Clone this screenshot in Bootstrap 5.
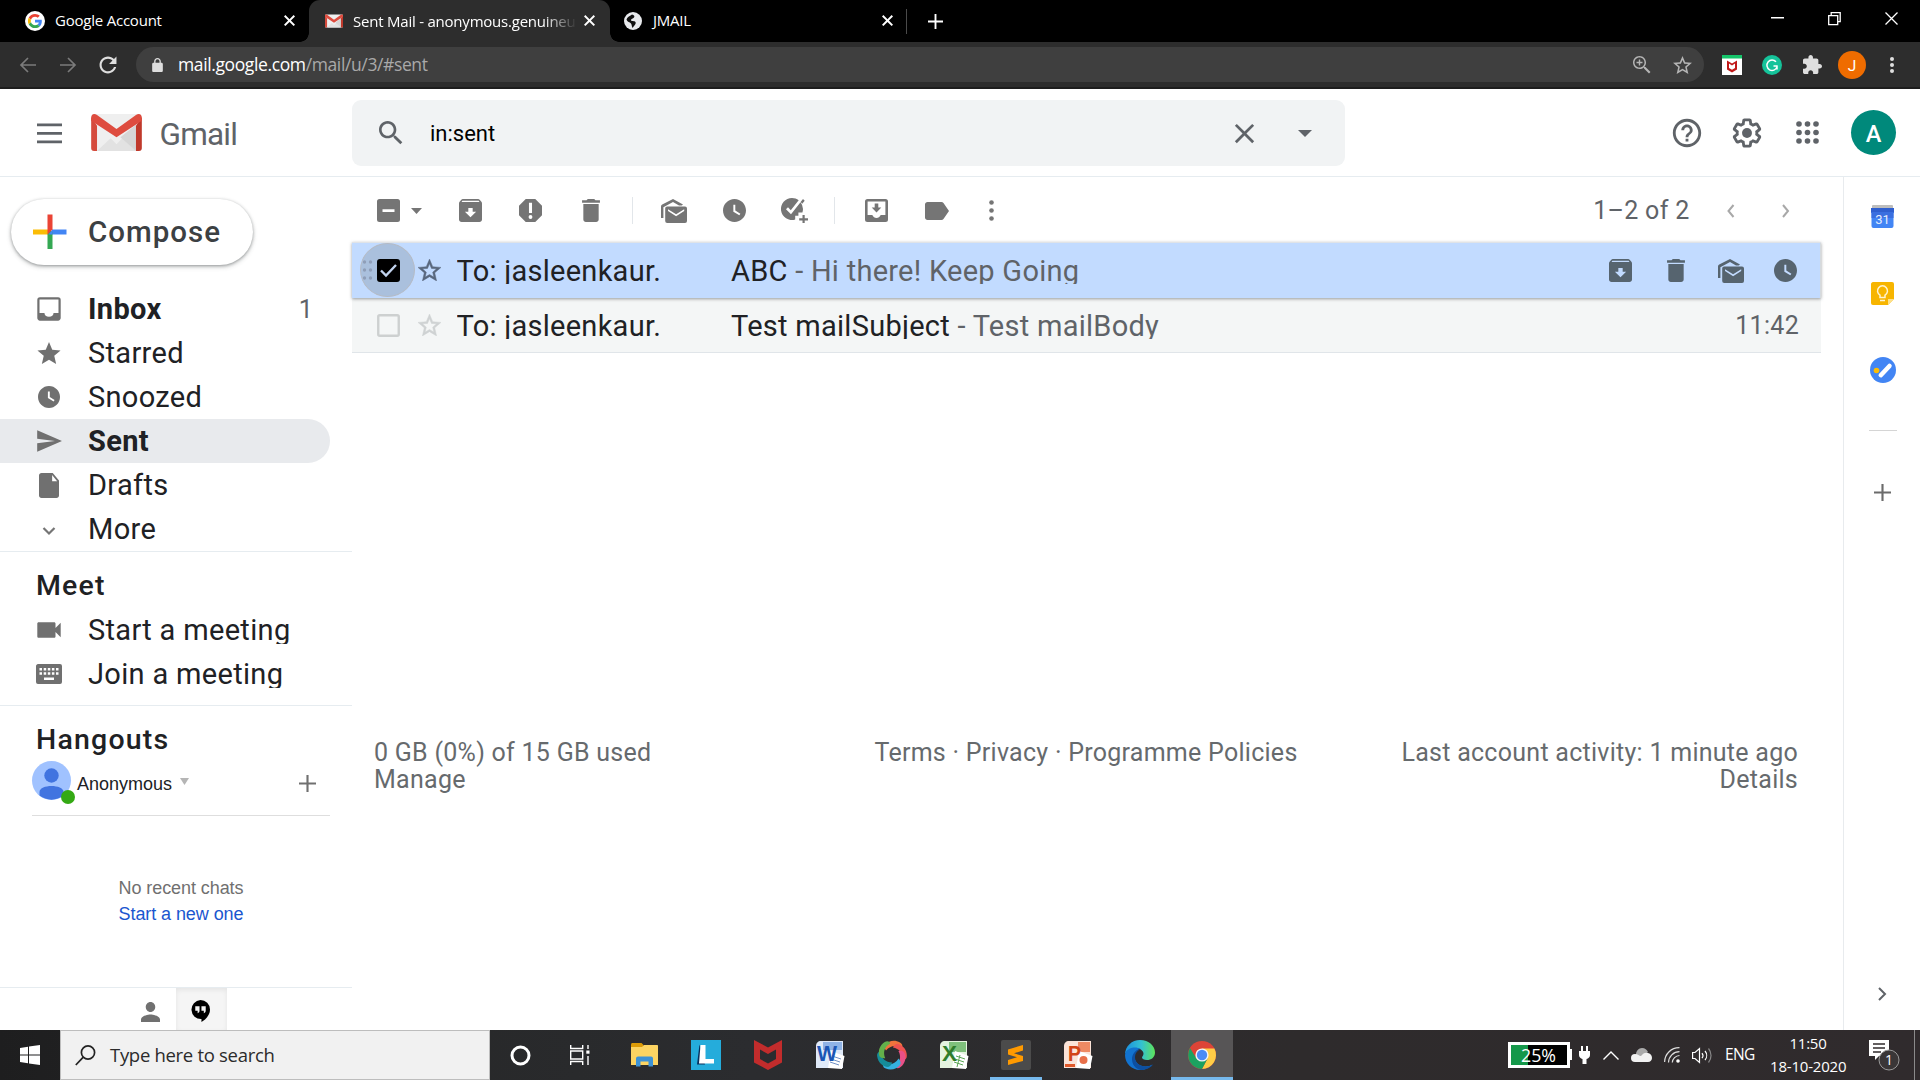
<!DOCTYPE html>
<html lang="en">
<head>
<meta charset="utf-8">
<title>Sent Mail</title>
<link href="https://cdn.jsdelivr.net/npm/bootstrap@5.3.0/dist/css/bootstrap.min.css" rel="stylesheet">
<style>
html,body{height:1080px;overflow:hidden}
body{width:1920px;font-family:Roboto,"Liberation Sans",sans-serif;color:#202124;background:#fff;line-height:1}
svg{display:block;flex:none;overflow:visible}
svg:not([fill]){fill:currentColor}
.segoe{font-family:"Open Sans","Noto Sans",sans-serif}
.w{white-space:nowrap;display:inline-block}
/* tab strip */
.tabstrip{height:42px;background:#000;color:#fff;font-size:15px;letter-spacing:-.22px}
.btab{height:42px;padding:0 12px 1px 25px}
.btab-1{width:309px;padding-right:14px}
.btab-2{width:301px;background:#2d2d2d;border-radius:11px 11px 0 0;padding:0 15px 1px 16px;position:relative}
.btab-2::before,.btab-2::after{content:"";position:absolute;bottom:0;width:9px;height:9px}
.btab-2::before{left:-9px;background:radial-gradient(circle at 0 0,#000 8.5px,#2d2d2d 9px)}
.btab-2::after{right:-9px;background:radial-gradient(circle at 100% 0,#000 8.5px,#2d2d2d 9px)}
.btab-3{width:296px;padding-left:14px;padding-right:13px}
.fadeout{width:222px;margin-left:10px;-webkit-mask-image:linear-gradient(90deg,#000 190px,transparent 224px);mask-image:linear-gradient(90deg,#000 190px,transparent 224px);line-height:24px}
.tsep{width:1px;height:25px;background:#4a4a4a;margin-top:9px}
.newtab{padding-left:21px}
.tt1{margin-left:10px}
.tt3{margin-left:11px}
.wctl{width:57px}
/* address row */
.addr{height:47px;background:#2d2d2d;border-bottom:2px solid #1d1d1d;color:#dedede;padding-top:5px}
.navbtn{width:40px;height:35px}
.pill{width:1568px;height:35px;border-radius:18px;background:#3f3f3f;margin-left:8px;padding:0 12px 0 16px}
.url{font-size:17.5px;letter-spacing:-.38px;color:#fff;margin-left:15px}
.url .rest{color:#a9a9a9}
.zoomic{margin-right:22px}
.exts{height:35px}
.extc{width:40px;height:35px}
/* header */
.ghead{height:88px;border-bottom:1px solid #e6ecf0;color:#5f6368}
.brand{width:352px;padding-left:32px}
.brand .logo{margin-left:23.500px}
.brand .name{font-size:31.500px;letter-spacing:-.8px;margin-left:18px;padding-top:4px}
.searchbox{width:993px;height:66px;border-radius:9px;background:#f1f3f4;margin-top:11px;padding-left:23px}
.searchbox .q{font-size:22px;color:#000;margin-left:23px;padding-top:2px}
.clearc{margin-right:3px}
.hcell{width:60px}
.hcell-r{width:60.400px}
.avc{padding-left:13px;padding-right:24.500px}
/* columns */
.stage{height:853px}
.side{width:352px}
.compose{width:242.500px;height:66px;border-radius:33px;margin:22px 0 0 10.500px;padding-left:21px;box-shadow:0 1px 3px rgba(60,64,67,.45),0 2px 4px 1px rgba(60,64,67,.15);color:#3c4043}
.compose .lbl{font-size:29.500px;font-weight:500;letter-spacing:1px;margin-left:20.500px;padding-top:1px}
.folders{margin-top:22px}
.frow{height:44px;width:330px;padding-left:36px;font-size:29px;letter-spacing:.32px}
.frow svg{color:#707070}
.frow .lbl{margin-left:26px;line-height:34px;height:34px}
.frow .lbl.clip{line-height:28px;height:28px}
.frow.on{background:#e8eaed;border-radius:0 22px 22px 0}
.frow .cnt{margin-left:auto;margin-right:17px;font-size:25px;color:#5f6368}
.clip{overflow:hidden}
.rule{border-top:1px solid #e6ecf0}
.meet{padding-top:13px}
.meet .mt{height:43px}
.rule2{margin-top:9px}
.hangt{padding-top:13px;height:55px}
.sechead{font-size:28.500px;font-weight:500;letter-spacing:1.200px;padding-left:36px}
.arial{font-family:"Liberation Sans",Arial,sans-serif}
.hav{width:39px;height:39px}
.online{left:29px;top:29px;width:14px;height:14px;border-radius:50%;background:#34a914;position:absolute}
.hrow{height:55px;margin:0 22px 0 32px;width:298px;border-bottom:1px solid #dedede}
.anon{font-size:18px;margin-left:6px;padding-top:14px}
.acaret{margin:17px 0 0 8px}
.aplus{margin:13.500px 14px 0 auto;color:#707070}
.nochat{font-size:18px;line-height:26px;letter-spacing:-.08px;color:#707070;margin-top:59px;padding-left:10px}
.nochat .lnk{color:#1a56cf}
.sidetabs{height:43px;padding-left:125px}
.pers{width:51px;padding-top:14px;padding-left:16px;color:#707070}
.tabsel{width:51px;height:42px;background:#f5f5f5;box-shadow:inset 0 2px 5px rgba(0,0,0,.07);padding:12px 0 0 15px}
/* toolbar */
.mainc{width:1491px}
.tbar{height:65px;padding:2px 0 0 24.500px;color:#757575}
.tcell{width:60.300px;display:flex;justify-content:center;align-items:center}
.vsep{width:1px;height:27px;background:#e2e6ea}
.crt{margin-left:11px}
.tc1{margin-left:18.500px}.s1{margin-left:11px}.tc2{margin-left:11px}.s2{margin-left:9.500px}.tc3{margin-left:11px}.tc4{width:50px}
.pgc{font-size:25px;color:#5f6368;letter-spacing:.3px;margin-right:13.500px}
.mact{width:55px;display:flex;justify-content:center;color:#56646f}
.lastc{margin-right:30px}
.mrow{width:1469px;font-size:29px;letter-spacing:.27px;padding-left:24.500px}
.mrow .who{width:274.500px}
.mrow .snip{color:#5f6368}
.mrow-sel{height:56px;background:#c2dbff;box-shadow:inset 0 1px 0 #dfe3e8,inset -1px 0 0 #d5dade,0 1px 3px rgba(60,64,67,.5);position:relative;z-index:1}
.mrow-2{height:55px;background:#f4f6f6;border-bottom:1.500px solid #e0e5e9}
.halo{width:55px;height:54px;left:8px;top:1px;border-radius:50%;background:rgba(100,110,120,.25);border:1px solid #b5bbc5;position:absolute}
.grip{left:10px;top:17px;position:absolute}
.star{margin-left:18.500px;margin-right:15.500px;margin-top:-1px}
.ln{line-height:34px;height:30px}
.lnwrap{height:30px;margin-bottom:2px}
.macts{margin-right:8px;padding-top:1px}
.tm{font-size:25px;letter-spacing:.3px;margin-right:22px}
.foot{width:1469px;margin-top:386px;padding:0 23px 0 22px;font-size:25px;line-height:27px;color:#666a6d;letter-spacing:.27px}
.foot>div{flex:1 1 0}
/* right panel */
.rail{width:77px;border-left:1px solid #e8ebee;color:#6b6b6b;padding-left:1px}
.r1{margin-top:27.500px}.r2{margin-top:54px}.r3{margin-top:52.500px}.r4{width:28px;height:1px;background:#d5d5d5;margin-top:47px}.r5{margin-top:52.500px}.r6{margin-bottom:29px}
/* taskbar */
.tkbar{height:50px;background:linear-gradient(90deg,#1e1e1f 0,#272829 400px,#2b2c2f 750px,#2e2b2c 1300px,#302b2d 1920px);color:#fff}
.start{width:60px}
.tsearch{width:430px;background:#f1f1f1;border:1px solid #bdbdbd;color:#2b2b2b;font-size:18.500px;letter-spacing:-.3px;padding-left:14px}
.ts{margin-left:14px}
.tk{width:62px;height:50px;display:flex;flex:none;justify-content:center;align-items:center;position:relative}
.tk.sys{width:60px}
.tk.first{margin-left:3px}
.tk.run::after{content:"";position:absolute;left:5px;right:5px;bottom:0;height:3px;background:#76b9ed}
.tk.act{background:#575556}.tk.act::after{left:0;right:0}
.bat{margin-right:7px}.plug{margin-right:13px}.chv{margin-right:11.500px}.cld{margin-right:12.500px}.wif{margin-right:12px}.spk{margin-right:12px}
.eng{font-size:15.500px;letter-spacing:-.7px;margin-right:15.500px}
.clk{font-size:15px;line-height:23px;letter-spacing:-.2px;width:76px;margin-right:23px}
.ntf{margin-right:14px}
.edge{width:1px;height:50px;background:#8a8a8a;margin-right:5px}
</style>
</head>
<body>
<svg width="0" height="0" class="position-absolute">
<symbol id="x" viewBox="0 0 24 24"><path d="M19 6.410 17.590 5 12 10.590 6.410 5 5 6.410 10.590 12 5 17.590 6.410 19 12 13.410 17.590 19 19 17.590 13.410 12z"/></symbol>
<symbol id="xs" viewBox="0 0 12 12"><path d="M1.500 0 6 4.500 10.500 0 12 1.500 7.500 6 12 10.500 10.500 12 6 7.500 1.500 12 0 10.500 4.500 6 0 1.500z"/></symbol>
<symbol id="arch" viewBox="3 3 18 18"><path d="M20.540 5.230l-1.390-1.680C18.880 3.210 18.470 3 18 3H6c-.470 0-.880.210-1.160.550L3.460 5.230C3.170 5.570 3 6.020 3 6.500V19c0 1.100.900 2 2 2h14c1.100 0 2-.900 2-2V6.500c0-.480-.170-.930-.460-1.270zM12 17.200 7.600 12.900h2.700v-2.800h3.400v2.800h2.700zM5 5.300l.600-1h12.800l.600 1z"/></symbol>
<symbol id="trash" viewBox="5 3 14 18"><path d="M6 19c0 1.100.900 2 2 2h8c1.100 0 2-.900 2-2V7H6v12zM19 4h-3.500l-1-1h-5l-1 1H5v2h14V4z"/></symbol>
<symbol id="clock" viewBox="2 2 20 20"><path d="M12 2C6.500 2 2 6.500 2 12s4.500 10 10 10 10-4.500 10-10S17.500 2 12 2zm4.200 14.200L11 13V7h1.700v5.100l4.400 2.700-.900 1.400z"/></symbol>
<symbol id="mails" viewBox="0 0 26 24"><path d="M2.400 19H0V7.600c0-.9.400-1.500 1.200-2L12 0l10 5.400-1.300 1.200H18L12 3.100 2.400 8.200z"/><path fill-rule="evenodd" d="M6.200 7.500h17.800a2 2 0 0 1 2 2V22a2 2 0 0 1-2 2H6.200a2 2 0 0 1-2-2V9.500c0-1.100.9-2 2-2zm.8 2.800v1.700l8.100 5.300 8.100-5.300v-1.700L15.100 15.200z"/></symbol>
<symbol id="staro" viewBox="2 2 20 19"><path d="M22 9.240l-7.190-.620L12 2 9.190 8.630 2 9.240l5.460 4.730L5.820 21 12 17.270 18.180 21l-1.630-7.030L22 9.240zM12 15.400l-3.760 2.270 1-4.280-3.320-2.880 4.380-.380L12 6.100l1.710 4.040 4.380.380-3.320 2.880 1 4.280L12 15.400z"/></symbol>
<symbol id="mlogo" viewBox="0 0 52 38"><rect width="52" height="38" rx="3" fill="#efefef"/><path d="M6 38 20 25 26 31 32 25 46 38z" fill="#e2e2e2"/><path d="M30 24 46 11v27z" fill="#d6d6d6"/><path d="M0 3v32a3 3 0 0 0 3 3h3V12z" fill="#d54b3d"/><path d="M52 3v32a3 3 0 0 1-3 3h-3V12z" fill="#c0392b"/><path d="M0 4C0 0 3-1 6 1l20 14.500L46 1c3-2 6-1 6 3v3L26 24 0 7z" fill="#de4c3f"/></symbol>
<symbol id="plus" viewBox="0 0 16 16"><path d="M7 0h2v7h7v2H9v7H7V9H0V7h7z"/></symbol>
</svg>

<!-- browser tabs -->
<div class="tabstrip d-flex segoe">
  <div class="btab btab-1 d-flex align-items-center">
    <svg width="20" height="20" viewBox="0 0 48 48"><circle cx="24" cy="24" r="24" fill="#fff"/><g transform="translate(7 7) scale(.71)"><path fill="#ea4335" d="M24 9.500c3.540 0 6.710 1.220 9.210 3.600l6.850-6.850C35.900 2.380 30.470 0 24 0 14.620 0 6.510 5.380 2.560 13.220l7.980 6.190C12.430 13.720 17.740 9.500 24 9.500z"/><path fill="#4285f4" d="M46.980 24.550c0-1.570-.150-3.090-.380-4.550H24v9.020h12.940c-.580 2.960-2.260 5.480-4.780 7.180l7.730 6c4.510-4.180 7.090-10.360 7.090-17.650z"/><path fill="#fbbc05" d="M10.530 28.590c-.480-1.450-.760-2.990-.760-4.590s.270-3.140.760-4.590l-7.980-6.190C.920 16.460 0 20.120 0 24c0 3.880.920 7.540 2.560 10.780l7.970-6.190z"/><path fill="#34a853" d="M24 48c6.480 0 11.930-2.130 15.890-5.810l-7.730-6c-2.150 1.450-4.920 2.300-8.160 2.300-6.260 0-11.570-4.220-13.470-9.910l-7.980 6.190C6.510 42.620 14.620 48 24 48z"/></g></svg>
    <span class="w tt1">Google Account</span><svg class="ms-auto" width="11" height="11"><use href="#xs"/></svg>
  </div>
  <div class="btab btab-2 d-flex align-items-center">
    <svg width="18" height="14"><use href="#mlogo"/></svg>
    <div class="fadeout"><span class="w">Sent Mail - anonymous.genuineu</span></div><svg class="ms-auto" width="11" height="11"><use href="#xs"/></svg>
  </div>
  <div class="btab btab-3 d-flex align-items-center">
    <svg width="18" height="18" viewBox="0 0 18 18"><circle cx="9" cy="9" r="9" fill="#e8eaed"/><path d="M8 2.500c2 .500 3 1.500 2 3-1 1.200-3 1-3 2.500s2.500.700 4 1.500c1.500 1 .500 3-1 4.500l-1.500 2C7.500 14 8 12 6.500 11S3 9.500 2.500 7.500C3 5 5.500 4.500 8 2.500z" fill="#111"/></svg>
    <span class="w tt3">JMAIL</span><svg class="ms-auto" width="11" height="11"><use href="#xs"/></svg>
  </div>
  <div class="tsep"></div>
  <div class="newtab d-flex align-items-center"><svg width="15" height="15"><use href="#plus"/></svg></div>
  <div class="ms-auto d-flex">
    <div class="wctl d-flex justify-content-center pt-3"><svg width="13" height="3"><rect y="1" width="13" height="1.500"/></svg></div>
    <div class="wctl d-flex justify-content-center pt-2"><svg class="mt-1" width="13" height="13" fill="none"><path d="M.7 3.700h9v9h-9zM3.200 3.500V.700h9v9h-2.300" stroke="#fff" stroke-width="1.300"/></svg></div>
    <div class="wctl d-flex justify-content-center pt-2"><svg class="mt-1" width="13" height="13"><path d="M.5.5l12 12M12.500.5l-12 12" stroke="#fff" stroke-width="1.300"/></svg></div>
  </div>
</div>

<!-- address row -->
<div class="addr d-flex segoe">
  <div class="navbtn d-flex align-items-center justify-content-center ms-2"><svg width="16" height="16" fill="none"><path d="M16 8H1.500M8 1 1 8l7 7" stroke="#7b7b7b" stroke-width="1.700"/></svg></div>
  <div class="navbtn d-flex align-items-center justify-content-center"><svg width="16" height="16" fill="none"><path d="M0 8h14.500M8 1l7 7-7 7" stroke="#7b7b7b" stroke-width="1.700"/></svg></div>
  <div class="navbtn d-flex align-items-center justify-content-center"><svg width="18" height="18" viewBox="3.500 3.500 17 17"><path d="M17.650 6.350C16.200 4.900 14.210 4 12 4c-4.420 0-7.990 3.580-7.990 8s3.570 8 7.990 8c3.730 0 6.840-2.550 7.730-6h-2.080c-.820 2.330-3.040 4-5.650 4-3.310 0-6-2.690-6-6s2.690-6 6-6c1.660 0 3.140.690 4.220 1.780L13 11h7V4l-2.350 2.350z"/></svg></div>
  <div class="pill d-flex align-items-center">
    <svg width="11" height="14" viewBox="4 1 16 21"><path fill-rule="evenodd" d="M18 8h-1V6c0-2.760-2.240-5-5-5S7 3.240 7 6v2H6c-1.100 0-2 .900-2 2v10c0 1.100.900 2 2 2h12c1.100 0 2-.900 2-2V10c0-1.100-.900-2-2-2zM9 8V6a3 3 0 0 1 6 0v2z"/></svg>
    <span class="w url">mail.google.com<span class="rest">/mail/u/3/#sent</span></span>
    <svg class="ms-auto zoomic" width="18" height="18" viewBox="3 3 18 18" fill="#b5b5b5"><path d="M15.500 14h-.790l-.280-.270C15.410 12.590 16 11.110 16 9.500 16 5.910 13.090 3 9.500 3S3 5.910 3 9.500 5.910 16 9.500 16c1.610 0 3.090-.590 4.230-1.570l.270.280v.790l5 4.990L20.490 19l-4.990-5zm-6 .5C6.500 14.500 4.500 12 4.500 9.500s2-5 5-5 5 2.200 5 5-2 5-5 5z"/><path d="M8.800 6.500h1.400v2.300h2.300v1.400h-2.300v2.300H8.800v-2.300H6.500V8.800h2.300z"/></svg>
    <svg width="19" height="18" fill="#b5b5b5"><use href="#staro"/></svg>
  </div>
  <div class="exts d-flex align-items-center ms-2">
    <div class="extc d-flex align-items-center justify-content-center"><svg width="20" height="20" viewBox="0 0 20 20"><rect width="20" height="20" fill="#fff"/><rect width="20" height="3.500" fill="#15c56a"/><path fill-rule="evenodd" d="M5 5.500l5 3 5-3v9l-5 3-5-3zm2 3V13l3 1.800 3-1.800V8.500l-3 2z" fill="#c01818"/></svg></div>
    <div class="extc d-flex align-items-center justify-content-center"><svg width="20" height="20" viewBox="0 0 20 20"><circle cx="10" cy="10" r="10" fill="#15c39a"/><path d="M14 6.800A5.200 5.200 0 1 0 15 12M15.500 11h-4M15 10.500v4" stroke="#fff" stroke-width="1.500" fill="none"/></svg></div>
    <div class="extc d-flex align-items-center justify-content-center"><svg width="19" height="19" viewBox="2 1 21 21"><path d="M20.500 11H19V7c0-1.100-.900-2-2-2h-4V3.500C13 2.120 11.880 1 10.500 1S8 2.120 8 3.500V5H4c-1.100 0-1.990.900-1.990 2v3.800H3.500c1.490 0 2.700 1.210 2.700 2.700s-1.210 2.700-2.700 2.700H2V20c0 1.100.900 2 2 2h3.800v-1.500c0-1.490 1.210-2.700 2.700-2.700 1.490 0 2.700 1.210 2.700 2.700V22H17c1.100 0 2-.900 2-2v-4h1.500c1.380 0 2.500-1.120 2.500-2.500S21.880 11 20.500 11z"/></svg></div>
    <div class="extc d-flex align-items-center justify-content-center"><svg width="28" height="28" viewBox="0 0 28 28"><circle cx="14" cy="14" r="14" fill="#ef6c00"/><text x="14" y="19.500" font-size="15.500" font-family="Roboto" letter-spacing="0" fill="#fff" text-anchor="middle">J</text></svg></div>
    <div class="extc d-flex align-items-center justify-content-center"><svg width="4" height="16"><circle cx="2" cy="2" r="2"/><circle cx="2" cy="8" r="2"/><circle cx="2" cy="14" r="2"/></svg></div>
  </div>
</div>

<!-- mail header -->
<div class="ghead d-flex">
  <div class="brand d-flex align-items-center">
    <svg width="35" height="24"><path d="M5 3.800h25M5 12.300h25M5 20.800h25" stroke="#5f6368" stroke-width="2.800"/></svg>
    <svg width="51" height="37" class="logo"><use href="#mlogo"/></svg>
    <span class="w name">Gmail</span>
  </div>
  <div class="searchbox d-flex align-items-center">
    <svg width="32" height="32" viewBox="0 0 24 24"><path d="M15.500 14h-.790l-.280-.270C15.410 12.590 16 11.110 16 9.500 16 5.910 13.090 3 9.500 3S3 5.910 3 9.500 5.910 16 9.500 16c1.610 0 3.090-.590 4.230-1.570l.270.280v.790l5 4.990L20.490 19l-4.990-5zm-6 0C7.010 14 5 11.990 5 9.500S7.010 5 9.500 5 14 7.010 14 9.500 11.990 14 9.500 14z"/></svg>
    <span class="w q">in:sent</span>
    <div class="ms-auto hcell clearc d-flex justify-content-center"><svg width="33" height="33"><use href="#x"/></svg></div>
    <div class="hcell d-flex justify-content-center me-2 pe-1"><svg width="14" height="7"><path d="M0 0h14L7 7z"/></svg></div>
  </div>
  <div class="ms-auto d-flex align-items-center">
    <div class="hcell-r d-flex justify-content-center"><svg width="34" height="34" viewBox="0 0 24 24"><path d="M11 18h2v-2h-2v2zm1-16C6.480 2 2 6.480 2 12s4.480 10 10 10 10-4.480 10-10S17.520 2 12 2zm0 18c-4.410 0-8-3.590-8-8s3.590-8 8-8 8 3.590 8 8-3.590 8-8 8zm0-14c-2.210 0-4 1.790-4 4h2c0-1.100.900-2 2-2s2 .900 2 2c0 2-3 1.750-3 5h2c0-2.250 3-2.500 3-5 0-2.210-1.790-4-4-4z"/></svg></div>
    <div class="hcell-r d-flex justify-content-center"><svg width="34" height="34" viewBox="0 0 24 24"><path d="M13.850 22.250h-3.700c-.740 0-1.360-.540-1.450-1.270l-.270-1.890c-.270-.140-.530-.290-.790-.460l-1.800.720c-.700.260-1.470-.030-1.810-.650L2.200 15.530c-.350-.660-.200-1.440.360-1.880l1.530-1.190c-.010-.150-.020-.300-.020-.460 0-.150.010-.310.020-.460l-1.520-1.190c-.590-.450-.740-1.260-.370-1.880l1.850-3.190c.340-.620 1.110-.900 1.790-.630l1.810.730c.260-.170.520-.320.780-.460l.270-1.910c.090-.700.710-1.250 1.440-1.250h3.700c.740 0 1.360.540 1.450 1.270l.270 1.890c.270.140.530.290.790.460l1.800-.720c.710-.260 1.480.030 1.820.650l1.840 3.180c.360.660.200 1.440-.360 1.880l-1.520 1.190c.010.150.020.300.020.460s-.010.310-.020.460l1.520 1.190c.560.450.720 1.230.370 1.860l-1.860 3.220c-.340.620-1.110.900-1.800.630l-1.800-.720c-.260.170-.520.320-.780.460l-.270 1.910c-.100.680-.720 1.220-1.460 1.220zm-3.230-2h2.760l.370-2.550.530-.220c.440-.180.880-.440 1.340-.780l.450-.340 2.380.960 1.380-2.400-2.030-1.580.070-.560c.030-.260.060-.510.060-.780s-.030-.530-.060-.780l-.070-.560 2.030-1.580-1.390-2.400-2.390.960-.450-.350c-.420-.320-.870-.580-1.330-.770l-.520-.220-.370-2.550h-2.760l-.370 2.550-.530.210c-.440.190-.880.440-1.340.790l-.450.330-2.380-.950-1.390 2.390 2.030 1.580-.070.560a7 7 0 0 0-.060.790c0 .260.020.530.060.780l.070.560-2.030 1.580 1.380 2.400 2.390-.960.450.350c.430.330.860.580 1.330.770l.530.220.380 2.550z"/><circle cx="12" cy="12" r="3.500"/></svg></div>
    <div class="hcell-r d-flex justify-content-center"><svg width="23" height="23" viewBox="0 0 23 23"><g id="dr"><circle cx="3" cy="3" r="2.800"/><circle cx="11.500" cy="3" r="2.800"/><circle cx="20" cy="3" r="2.800"/></g><use href="#dr" y="8.500"/><use href="#dr" y="17"/></svg></div>
    <div class="d-flex avc"><svg width="45" height="45" viewBox="0 0 44 44"><circle cx="22" cy="22" r="22" fill="#00897b"/><text x="22" y="31" font-size="23" font-weight="500" font-family="Roboto" fill="#fff" text-anchor="middle">A</text></svg></div>
  </div>
</div>

<div class="stage d-flex">
  <!-- folders -->
  <div class="side d-flex flex-column">
    <div class="compose d-flex align-items-center"><svg width="36" height="36" viewBox="0 0 36 36"><path fill="#fbbc05" d="M1 15.500h15v5H1z"/><path fill="#4285f4" d="M20 15.500h14.500v5H20z"/><path fill="#34a853" d="M15.500 20.500l2.500-5 2.500 2.500v17h-5z"/><path fill="#ea4335" d="M15.500.5h5v15l-5 5z"/><path fill="#4285f4" d="M20.500 15.500v5h-4z"/></svg><span class="w lbl">Compose</span></div>
    <div class="folders">
      <div class="frow d-flex align-items-center fw-bold"><svg width="26" height="24" viewBox="2 3 20 18"><path fill-rule="evenodd" d="M19 3H5a2 2 0 0 0-2 2v14c0 1.100.900 2 2 2h14c1.100 0 2-.900 2-2V5a2 2 0 0 0-2-2zm.300 12H15.500c0 1.660-1.350 3-3.500 3s-3.500-1.340-3.500-3H4.700V4.700h14.600z"/></svg><span class="w lbl">Inbox</span><span class="cnt fw-normal">1</span></div>
      <div class="frow d-flex align-items-center"><svg width="26" height="22" viewBox="2 2 20 19"><path d="M12 17.270L18.180 21l-1.640-7.030L22 9.240l-7.190-.610L12 2 9.190 8.630 2 9.240l5.460 4.730L5.820 21z"/></svg><span class="w lbl">Starred</span></div>
      <div class="frow d-flex align-items-center"><svg width="26" height="22"><use href="#clock"/></svg><span class="w lbl">Snoozed</span></div>
      <div class="frow d-flex align-items-center on fw-bold"><svg width="26" height="22" viewBox="1 3 22 18"><path d="M2.010 21L23 12 2.010 3 2 10l15 2-15 2z"/></svg><span class="w lbl">Sent</span></div>
      <div class="frow d-flex align-items-center"><svg width="26" height="25" viewBox="2 2 20 20"><path fill-rule="evenodd" d="M6 2c-1.100 0-2 .900-2 2v16c0 1.100.900 2 2 2h12c1.100 0 2-.900 2-2V8l-5-6H6zm8.500 6.500V3.500l4 5z"/></svg><span class="w lbl">Drafts</span></div>
      <div class="frow d-flex align-items-center"><svg class="mt-1" width="26" height="9" viewBox="0 0 26 9" fill="none"><path d="M7.500 1l5.500 5.500L18.500 1" stroke="#757575" stroke-width="2.200"/></svg><span class="w lbl">More</span></div>
    </div>
    <div class="rule meet">
      <div class="sechead mt"><span class="w lh-base">Meet</span></div>
      <div class="frow d-flex align-items-center"><svg width="26" height="18" viewBox="2 6 20 12"><path d="M17 10.500V7c0-.550-.450-1-1-1H4c-.550 0-1 .450-1 1v10c0 .550.450 1 1 1h12c.550 0 1-.450 1-1v-3.500l4 4v-11l-4 4z"/></svg><span class="w lbl clip">Start a meeting</span></div>
      <div class="frow d-flex align-items-center"><svg width="26" height="20" viewBox="0 0 26 20"><path fill-rule="evenodd" d="M2 0h22a2 2 0 0 1 2 2v16a2 2 0 0 1-2 2H2a2 2 0 0 1-2-2V2C0 1 1 0 2 0zm1.500 4v2.500H6V4zm4.200 0v2.500h2.500V4zm4.100 0v2.500h2.500V4zm4.100 0v2.500h2.500V4zM20 4v2.500h2.500V4zM3.500 8.300v2.500H6V8.300zm4.200 0v2.500h2.500V8.300zm4.100 0v2.500h2.500V8.300zm4.100 0v2.500h2.500V8.300zm4.100 0v2.500h2.500V8.300zM8 13.500V16h10v-2.500z"/></svg><span class="w lbl clip">Join a meeting</span></div>
    </div>
    <div class="rule rule2">
      <div class="sechead hangt"><span class="w lh-base">Hangouts</span></div>
      <div class="hrow d-flex arial">
        <div class="position-relative hav"><svg width="39" height="39" viewBox="0 0 39 39"><circle cx="19.500" cy="19.500" r="19.500" fill="#a0c2ff"/><circle cx="19.500" cy="14.500" r="7.200" fill="#4174e0"/><path d="M7.500 34.500V31c0-4 6-6 12-6s12 2 12 6v3.500a19.500 19.500 0 0 1-24 0z" fill="#4174e0"/></svg><span class="online"></span></div>
        <span class="w anon">Anonymous</span>
        <svg class="acaret" width="9" height="7"><path d="M0 0h9L4.500 7z" fill="#b5b5b5"/></svg>
        <svg class="aplus" width="17" height="17"><use href="#plus"/></svg>
      </div>
    </div>
    <div class="text-center arial nochat"><div class="w">No recent chats</div><br><div class="w lnk">Start a new one</div></div>
    <div class="rule mt-auto d-flex sidetabs">
      <div class="pers"><svg width="19" height="20" viewBox="4 4 16 16" preserveAspectRatio="none"><path d="M12 12c2.210 0 4-1.790 4-4s-1.790-4-4-4-4 1.790-4 4 1.790 4 4 4zm0 2c-2.670 0-8 1.340-8 4v2h16v-2c0-2.660-5.330-4-8-4z"/></svg></div>
      <div class="tabsel"><svg width="19" height="22" viewBox="0 0 20 23"><path fill="#000" d="M10 0a10 10 0 0 1 10 10c0 6-4.500 10.500-9 13v-3A10 10 0 0 1 10 0z"/><path fill="#f5f5f5" d="M4.500 6.500H9V11c0 1.500-.7 2.300-2 2.800v-2.500H4.500zM11 6.500h4.500V11c0 1.500-.7 2.300-2 2.800v-2.500H11z"/></svg></div>
    </div>
  </div>

  <!-- message list -->
  <div class="mainc">
    <div class="tbar d-flex align-items-center">
      <svg width="23" height="23" viewBox="0 0 23 23"><path fill-rule="evenodd" d="M2.500 0h18A2.500 2.500 0 0 1 23 2.500v18a2.500 2.500 0 0 1-2.500 2.500h-18A2.500 2.500 0 0 1 0 20.500v-18A2.500 2.500 0 0 1 2.500 0zM5.500 10.300v2.600h12v-2.600z"/></svg>
      <svg class="crt" width="11" height="6"><path d="M0 0h11L5.500 6z"/></svg>
      <div class="tcell tc1"><svg width="23" height="23"><use href="#arch"/></svg></div>
      <div class="tcell"><svg width="23" height="23" viewBox="3 3 18 18"><path fill-rule="evenodd" d="M15.730 3H8.270L3 8.270v7.460L8.270 21h7.460L21 15.730V8.270zM12 15.600a1.500 1.500 0 1 1 0 3 1.500 1.500 0 0 1 0-3zM10.800 6h2.400v8h-2.400z"/></svg></div>
      <div class="tcell"><svg width="20" height="23"><use href="#trash"/></svg></div>
      <div class="vsep s1"></div>
      <div class="tcell tc2"><svg width="26" height="24"><use href="#mails"/></svg></div>
      <div class="tcell"><svg width="23" height="23"><use href="#clock"/></svg></div>
      <div class="tcell"><svg width="27" height="25" viewBox="0 0 27 25"><path d="M11 0c2.500 0 4.800.9 6.700 2.300l-1.600 1.900L9.800 12.200 7 9.300 5 11.200l5 5 9.500-12A11 11 0 0 1 22 11c0 1.300-.2 2.500-.6 3.600h-4v3.200h-3.200v3.700A11 11 0 1 1 11 0z"/><path d="M22 1l1.700 1.700-2.500 3-1.600-1.700zM21.500 17h2.200v3.200H27v2.200h-3.300V25h-2.200v-2.600h-3.300v-2.200h3.300z"/></svg></div>
      <div class="vsep s2"></div>
      <div class="tcell tc3"><svg width="23" height="23" viewBox="0 0 23 23"><path fill-rule="evenodd" d="M2.500 0h18A2.500 2.500 0 0 1 23 2.500v18a2.500 2.500 0 0 1-2.500 2.500h-18A2.500 2.500 0 0 1 0 20.500v-18A2.500 2.500 0 0 1 2.500 0zM2.600 2.600v13.500h4.700c1 2 2.300 2.800 4.200 2.800s3.200-.8 4.200-2.800h4.700V2.600z"/><path d="M9.700 4.500h3.600v4h3L11.500 13.500 6.700 8.500h3z"/></svg></div>
      <div class="tcell"><svg width="24" height="18" viewBox="3 5 19 14" preserveAspectRatio="none"><path d="M17.630 5.840C17.270 5.330 16.670 5 16 5L5 5.010C3.900 5.010 3 5.900 3 7v10c0 1.100.900 1.990 2 1.990L16 19c.670 0 1.270-.330 1.630-.840L22 12l-4.370-6.160z"/></svg></div>
      <div class="tcell tc4"><svg width="5" height="21"><circle cx="2.500" cy="2.500" r="2.300"/><circle cx="2.500" cy="10.500" r="2.300"/><circle cx="2.500" cy="18.500" r="2.300"/></svg></div>
      <div class="pgc ms-auto w">1–2 of 2</div>
      <div class="mact"><svg width="8" height="14" fill="none"><path d="M6.500 1l-5 6 5 6" stroke="#a8a8a8" stroke-width="2"/></svg></div>
      <div class="mact lastc"><svg width="8" height="14" fill="none"><path d="M1 1l5 6-5 6" stroke="#a8a8a8" stroke-width="2"/></svg></div>
    </div>
    <div class="mrow mrow-sel d-flex align-items-center">
      <span class="halo"></span>
      <svg class="grip" width="10" height="22" fill="#8f9eb8"><circle cx="2.500" cy="3" r="1.700"/><circle cx="8.500" cy="3" r="1.700"/><circle cx="2.500" cy="11" r="1.700"/><circle cx="8.500" cy="11" r="1.700"/><circle cx="2.500" cy="19" r="1.700"/><circle cx="8.500" cy="19" r="1.700"/></svg>
      <svg class="position-relative" width="23" height="23" viewBox="0 0 23 23"><rect width="23" height="23" rx="3" fill="#000"/><path d="M4 11.500l5 5L19 6" fill="none" stroke="#c2d3ee" stroke-width="2.400"/></svg>
      <svg class="star" width="23" height="22" fill="#59677d" stroke="#59677d" stroke-width=".4"><use href="#staro"/></svg>
      <div class="who lnwrap"><span class="w ln clip">To: jasleenkaur.</span></div>
      <div class="lnwrap"><span class="w ln clip">ABC<span class="snip"> - Hi there! Keep Going</span></span></div>
      <div class="d-flex ms-auto macts">
        <div class="mact"><svg width="23" height="23"><use href="#arch"/></svg></div>
        <div class="mact"><svg width="20" height="23"><use href="#trash"/></svg></div>
        <div class="mact"><svg width="26" height="24"><use href="#mails"/></svg></div>
        <div class="mact"><svg width="23" height="23"><use href="#clock"/></svg></div>
      </div>
    </div>
    <div class="mrow mrow-2 d-flex align-items-center">
      <svg width="23" height="23" viewBox="0 0 23 23"><rect x="1.250" y="1.250" width="20.500" height="20.500" rx="1.500" fill="none" stroke="#cdd0d0" stroke-width="2.400"/></svg>
      <svg class="star" width="23" height="22" fill="#cfd2d3" stroke="#cfd2d3" stroke-width=".4"><use href="#staro"/></svg>
      <div class="who lnwrap"><span class="w ln clip">To: jasleenkaur.</span></div>
      <div class="lnwrap"><span class="w ln clip">Test mailSubject<span class="snip"> - Test mailBody</span></span></div>
      <div class="ms-auto snip tm w">11:42</div>
    </div>
    <div class="foot d-flex">
      <div><span class="w">0 GB (0%) of 15 GB used</span><br><span class="w">Manage</span></div>
      <div class="text-center"><span class="w">Terms · Privacy · Programme Policies</span></div>
      <div class="text-end"><span class="w">Last account activity: 1 minute ago</span><br><span class="w">Details</span></div>
    </div>
  </div>

  <!-- side panel -->
  <div class="rail d-flex flex-column align-items-center">
    <svg class="r1" width="23" height="23" viewBox="0 0 23 23"><rect x="1" width="21" height="5" rx="1" fill="#bdbdbd"/><path d="M0 3h23v5H0z" fill="#2f5fcf"/><path d="M.500 7h22v14a2 2 0 0 1-2 2h-18a2 2 0 0 1-2-2z" fill="#4285f4"/><path d="M.500 7h22v6H.500z" fill="#3a6fe0"/><text x="11.500" y="18.500" font-size="13" font-family="Roboto" fill="#e3ecfd" text-anchor="middle">31</text></svg>
    <svg class="r2" width="23" height="23" viewBox="0 0 23 23"><path d="M2 0h19a2 2 0 0 1 2 2v15l-6 6H2a2 2 0 0 1-2-2V2C0 1 1 0 2 0z" fill="#f7b500"/><path d="M23 17l-6 6v-6z" fill="#fde08a"/><path d="M9 15.500v-2.300a5 5 0 1 1 5 0v2.300zM9 18.500h5" fill="none" stroke="#fff3cf" stroke-width="1.500"/></svg>
    <svg class="r3" width="26" height="26" viewBox="0 0 26 26"><circle cx="13" cy="13" r="13" fill="#4285f4"/><circle cx="6.500" cy="13.500" r="2.800" fill="#fbbc04"/><path d="M10.800 18.200 19.500 9" stroke="#fff" stroke-width="4.500" stroke-linecap="round"/></svg>
    <div class="r4"></div>
    <svg class="r5" width="17" height="17"><use href="#plus"/></svg>
    <svg class="r6 mt-auto" width="9" height="14" fill="none"><path d="M1 1l6 6-6 6" stroke="#5f6368" stroke-width="2"/></svg>
  </div>
</div>

<!-- taskbar -->
<div class="tkbar d-flex segoe">
  <div class="start d-flex align-items-center justify-content-center"><svg width="20" height="20" viewBox="0 0 20 20"><path d="M0 3l8-1.200v7.700H0zM9 1.600 20 0v9.500H9zM0 10.500h8v7.700L0 17zM9 10.500h11V20L9 18.400z"/></svg></div>
  <div class="tsearch d-flex align-items-center"><svg width="21" height="21" viewBox="0 0 21 21"><path d="M8.300 12.200.800 20" stroke="#222" stroke-width="1.700"/><circle cx="13" cy="7.500" r="6.600" fill="none" stroke="#222" stroke-width="1.700"/></svg><span class="w ts">Type here to search</span></div>
  <div class="d-flex">
    <div class="tk sys"><svg width="21" height="21"><circle cx="10.500" cy="10.500" r="8.500" fill="none" stroke="#fff" stroke-width="3"/></svg></div>
    <div class="tk sys"><svg width="20" height="20" viewBox="0 0 20 20"><path d="M.700 0v3.500h12V0M.700 20v-3.500h12V20M.700 6h12v8h-12zM18 0v4M18 11v9" fill="none" stroke="#fff" stroke-width="1.400"/><path d="M16.300 5.500h3.200v3.200h-3.200z"/></svg></div>
    <div class="tk first"><svg width="27" height="24" viewBox="0 0 27 24"><path d="M0 1.500C0 .600.600 0 1.500 0h9l2 2v3H0z" fill="#dc9b07"/><path d="M0 4h11l2-2h13c.600 0 1 .400 1 1v19H0z" fill="#fcd462"/><path d="M5 23.500V15.500A2 2 0 0 1 7 13.500h13a2 2 0 0 1 2 2v8h-4.500V18.500h-8v5z" fill="#3c92d6"/></svg></div>
    <div class="tk"><svg width="30" height="30" viewBox="0 0 30 30"><rect width="30" height="30" fill="#25acdb"/><path d="M8.500 4.500 6 24.500H14z" fill="#08305c"/><path d="M9.500 5h5v14h8.500v4.500H8z" fill="#fff"/></svg></div>
    <div class="tk"><svg width="28" height="30" viewBox="0 0 28 30"><path fill-rule="evenodd" d="M0 0l14 7.500L28 0v22.500L14 30 0 22.500zM6 9.500v9.500l8 4.500 8-4.500V9.500l-8 4.500z" fill="#c22c2c"/></svg></div>
    <div class="tk"><svg width="29" height="28" viewBox="0 0 29 28"><path d="M5 0h22v27H0V5C0 2 2 0 5 0z" fill="#dfe9f8"/><path d="M7 1h19v8H7z" fill="#8fb3e6"/><path d="M15 10l13.500 5L26 28l-14-1z" fill="#fff"/><path d="M16 15l9 3M15 18l9 3M14 21l9 3" stroke="#6f8fc4"/><text x="1" y="20" font-size="22" font-weight="bold" font-family="Liberation Sans" letter-spacing="0" fill="#1b56b5" textLength="20" lengthAdjust="spacingAndGlyphs">W</text></svg></div>
    <div class="tk"><svg width="30" height="30" viewBox="0 0 30 30"><defs><path id="blade" d="M8 4.500C12 .5 18-.5 23 2.500 26 4 26 7.500 24 8 19 4.500 13 5.500 9 10.500 7.500 8.500 7.200 6 8 4.500z"/></defs><use href="#blade" fill="#f0743c"/><use href="#blade" fill="#ef5350" transform="rotate(60 15 15)"/><use href="#blade" fill="#ea5087" transform="rotate(112 15 15)"/><use href="#blade" fill="#35b2e0" transform="rotate(172 15 15)"/><use href="#blade" fill="#158c99" transform="rotate(232 15 15)"/><use href="#blade" fill="#63b04a" transform="rotate(298 15 15)"/></svg></div>
    <div class="tk"><svg width="29" height="28" viewBox="0 0 29 28"><path d="M5 0h22v27H0V5C0 2 2 0 5 0z" fill="#e4f3df"/><path d="M9 1h17v10H9z" fill="#7fc07c"/><path d="M15 10l13.500 5L26 28l-14-1z" fill="#fff"/><path d="M16 15l9 3M15 18l9 3M14 21l9 3M20 14l-3 12" stroke="#5aa655"/><text x="2" y="20" font-size="22" font-weight="bold" font-family="Liberation Sans" letter-spacing="0" fill="#2f7d2c" textLength="15" lengthAdjust="spacingAndGlyphs">X</text></svg></div>
    <div class="tk run"><svg width="30" height="30" viewBox="0 0 30 30"><rect width="30" height="30" rx="2" fill="#4b4b4b"/><path d="M7 9.500 22 5v5.500l-9 2.800 9 2.700v5L7 25v-5l9-2.700-9-2.800z" fill="#ff9a00"/></svg></div>
    <div class="tk"><svg width="29" height="28" viewBox="0 0 29 28"><path d="M5 0h22v27H0V5C0 2 2 0 5 0z" fill="#fbe3d8"/><path d="M14 1h12v10H14z" fill="#ee8a63"/><path d="M15 10l13.500 5L26 28l-14-1z" fill="#fff"/><circle cx="19.500" cy="19" r="4" fill="#e8704a"/><path d="M1 23h10v3H1z" fill="#e0592b"/><text x="4" y="20" font-size="22" font-weight="bold" font-family="Liberation Sans" letter-spacing="0" fill="#d24317" textLength="13" lengthAdjust="spacingAndGlyphs">P</text></svg></div>
    <div class="tk"><svg width="30" height="30" viewBox="0 0 30 30"><defs><linearGradient id="eg" x1="0" x2="1"><stop offset="0" stop-color="#1a8fe0"/><stop offset=".550" stop-color="#34c1d0"/><stop offset="1" stop-color="#5ee45a"/></linearGradient></defs><path d="M15 0c9 0 15 6 15 12.500 0 5-4 7.500-8 7.500-3 0-5-1-5-2.500 0-1 1.500-1.500 1.500-4C18.500 11 15 8 10.500 8 5 8 1 11 0 15 0 6 7 0 15 0z" fill="url(#eg)"/><path d="M0 15c1-5 5-7.500 10-7.500 2 0 4 .500 5.500 1.500-4 0-6 4-6 7.500 0 6 5 10 11 10 3 0 5-.800 7-2C24.500 28 20 30 15 30 7 30 0 23.500 0 15z" fill="#1273d0"/><path d="M15 9.500c-3 1.500-5 4-5 7.500 0 6 5 9.500 11 9.500 2.500 0 5-.800 7-2-3 4-8 5.500-12 5.500-6-1-9-6-9-11 0-4.500 3-9 8-9.500z" fill="#0d4fa0"/></svg></div>
    <div class="tk run act"><svg width="28" height="28" viewBox="0 0 28 28"><circle cx="14" cy="14" r="14" fill="#dd4437"/><path d="M14 7.500h12.400A14 14 0 0 1 14 28l5.700-10.700z" fill="#ffcd46"/><path d="M2 7A14 14 0 0 0 14 28l5.700-10.700L14 20 8.300 17.300z" fill="#1ba260"/><circle cx="14" cy="14" r="6.600" fill="#f4f4f4"/><circle cx="14" cy="14" r="5.200" fill="#4c8bf5"/></svg></div>
  </div>
  <div class="ms-auto d-flex align-items-center">
    <svg class="bat" width="64" height="26" viewBox="0 0 64 26"><path d="M0 0h62v7h2v11h-2v8H0z" fill="#fff"/><path d="M3 3h56v20H3z" fill="#000"/><path d="M3 3h17v20H3z" fill="#15984a"/><text x="13" y="19.500" font-size="17.500" font-family="Open Sans" fill="#fff" textLength="35" lengthAdjust="spacingAndGlyphs">25%</text></svg>
    <svg class="plug" width="11" height="18" viewBox="0 0 11 18"><path d="M2 0h2v5h3V0h2v5h2v4c0 2-1.500 3.500-3.500 4v5h-4v-5C1.500 12.500 0 11 0 9V5h2z"/></svg>
    <svg class="chv" width="16" height="9" fill="none"><path d="M.500 8.500 8 1l7.500 7.500" stroke="#fff" stroke-width="1.400"/></svg>
    <svg class="cld" width="21" height="14" viewBox="0 0 21 14"><path d="M5 9C4 3 8 0 11 0c3 0 5 2 6 4l-9 6z" fill="#aaa"/><path d="M4 14a4 4 0 0 1 0-8c3 0 4 2 6 2 2-3 5-4 7-3 3 .500 4 3 4 5s-1.500 4-4 4z" fill="#f2f2f2"/></svg>
    <svg class="wif" width="16" height="16" viewBox="0 0 16 16"><g fill="none" stroke="#ddd" stroke-width="1.200"><path d="M.600 15A14.500 14.500 0 0 1 15.500.700"/><path d="M4.500 15.500A11 11 0 0 1 15.500 4.700"/><path d="M8.300 15.500a7.500 7.500 0 0 1 7.200-7"/></g><circle cx="14" cy="14" r="1.800"/></svg>
    <svg class="spk" width="21" height="17" viewBox="0 0 21 17" fill="none"><path d="M.600 5.500H3L7.500 1.500v14L3 11.500H.600zM10 6a4 4 0 0 1 0 5M13 4a7 7 0 0 1 0 9" stroke="#fff" stroke-width="1.200"/><path d="M16.500 1.500a11 11 0 0 1 0 14" stroke="#888" stroke-width="1.200"/></svg>
    <span class="w eng">ENG</span>
    <div class="clk text-center"><span class="w">11:50</span><br><span class="w">18-10-2020</span></div>
    <svg class="ntf" width="31" height="31" viewBox="0 0 31 31"><path d="M0 0h20v16H10l-4 4v-4H0z" fill="#fff"/><path d="M4 4h12M4 8h12M4 12h8" stroke="#302b2d" stroke-width="1.300"/><circle cx="20" cy="20" r="10" fill="#3a3637" stroke="#999" stroke-width="1"/><text x="20" y="25" font-size="14" font-family="Open Sans" fill="#fff" text-anchor="middle">1</text></svg>
    <div class="edge"></div>
  </div>
</div>
<script src="https://cdn.jsdelivr.net/npm/bootstrap@5.3.0/dist/js/bootstrap.bundle.min.js"></script>
</body>
</html>
